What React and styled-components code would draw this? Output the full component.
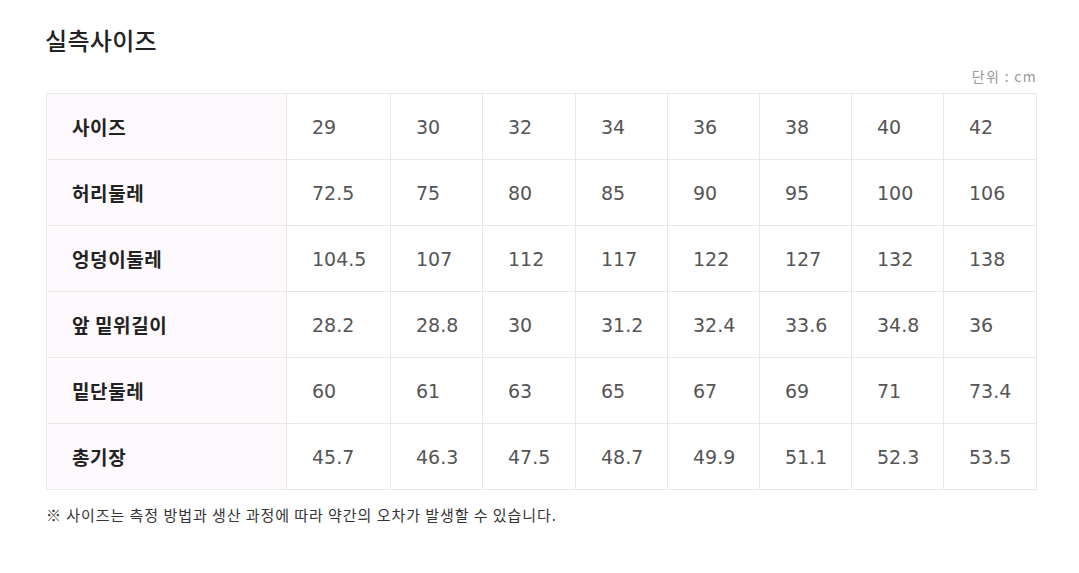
import styled, { createGlobalStyle } from "styled-components";

const GlobalStyle = createGlobalStyle`
  body {
    margin: 0;
    background: #fff;
    font-family: "DejaVu Sans", "Noto Sans CJK KR", sans-serif;
  }
`;

const Page = styled.div`
  padding: 26px 0 0 45px;
  width: 992px;
`;

const Title = styled.h2`
  margin: 0;
  font-family: "Noto Sans CJK KR", sans-serif;
  font-size: 24px;
  font-weight: 500;
  line-height: 28px;
  letter-spacing: 0.3px;
  color: #222;
`;

const Unit = styled.div`
  margin-top: 12px;
  text-align: right;
  font-family: "Noto Sans CJK KR", sans-serif;
  font-size: 14px;
  line-height: 20px;
  letter-spacing: 1.3px;
  color: #999;
`;

const Grid = styled.div`
  margin: 7px 0 0 1px;
  display: grid;
  grid-template-columns: 240px 104px 92px 93px 92px 92px 92px 92px 93px;
  grid-auto-rows: 66px;
  border-top: 1px solid #e8e8e8;
  border-left: 1px solid #e8e8e8;
`;

const Cell = styled.div`
  display: flex;
  align-items: center;
  padding-left: 25px;
  border-right: 1px solid #e8e8e8;
  border-bottom: 1px solid #e8e8e8;
  background: ${(p) => (p.$head ? "#fdf9fd" : "#fff")};
  color: ${(p) => (p.$head ? "#222" : "#555")};
  font-family: ${(p) =>
    p.$head ? '"Noto Sans CJK KR", sans-serif' : '"DejaVu Sans", sans-serif'};
  font-size: ${(p) => (p.$head ? "19px" : "19px")};
  letter-spacing: ${(p) => (p.$head ? "0.6px" : "0")};
  font-weight: ${(p) => (p.$head ? 700 : 400)};
`;

const Note = styled.p`
  margin: 15px 0 0 1px;
  font-family: "Noto Sans CJK KR", sans-serif;
  font-size: 15px;
  line-height: 20px;
  letter-spacing: 0.95px;
  color: #333;
`;

const rows = [
  ["사이즈", "29", "30", "32", "34", "36", "38", "40", "42"],
  ["허리둘레", "72.5", "75", "80", "85", "90", "95", "100", "106"],
  ["엉덩이둘레", "104.5", "107", "112", "117", "122", "127", "132", "138"],
  ["앞 밑위길이", "28.2", "28.8", "30", "31.2", "32.4", "33.6", "34.8", "36"],
  ["밑단둘레", "60", "61", "63", "65", "67", "69", "71", "73.4"],
  ["총기장", "45.7", "46.3", "47.5", "48.7", "49.9", "51.1", "52.3", "53.5"],
];

export default function App() {
  return (
    <>
      <GlobalStyle />
      <Page>
        <Title>실측사이즈</Title>
        <Unit>단위 : cm</Unit>
        <Grid>
          {rows.map((row) =>
            row.map((v, i) => (
              <Cell key={row[0] + i} $head={i === 0}>
                {v}
              </Cell>
            ))
          )}
        </Grid>
        <Note>※ 사이즈는 측정 방법과 생산 과정에 따라 약간의 오차가 발생할 수 있습니다.</Note>
      </Page>
    </>
  );
}
